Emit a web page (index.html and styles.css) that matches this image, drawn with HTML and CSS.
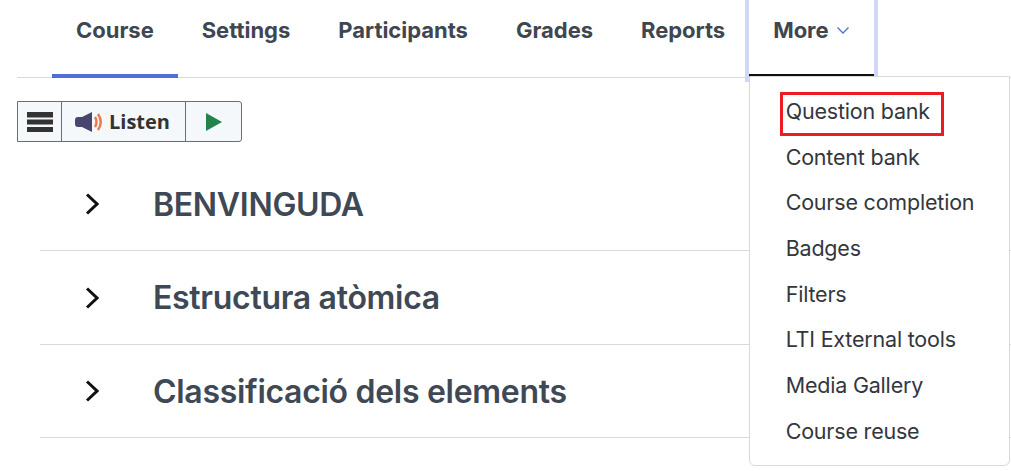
FILE: index.html
```html
<!DOCTYPE html>
<html lang="en">
<head>
    <meta charset="UTF-8">
    <title>Course</title>
    <link rel="stylesheet" href="styles.css">
</head>
<body>
    <nav class="tabs">
        <a class="tab active">Course</a>
        <a class="tab">Settings</a>
        <a class="tab">Participants</a>
        <a class="tab">Grades</a>
        <a class="tab">Reports</a>
        <div class="more-wrap">
            <a class="tab more">More
                <svg class="more-caret" width="14" height="9" viewBox="0 0 14 9"><path d="M1.500 1.500l5.500 5.500 5.500-5.500" fill="none" stroke="#4f6fd8" stroke-width="1.300"/></svg>
            </a>
            <ul class="menu">
                <li class="menu-item">Question bank<span class="highlight"></span></li>
                <li class="menu-item">Content bank</li>
                <li class="menu-item">Course completion</li>
                <li class="menu-item">Badges</li>
                <li class="menu-item">Filters</li>
                <li class="menu-item">LTI External tools</li>
                <li class="menu-item">Media Gallery</li>
                <li class="menu-item">Course reuse</li>
            </ul>
        </div>
    </nav>

    <div class="listen-bar">
        <div class="listen-cell menu-cell">
            <svg width="26" height="20" viewBox="0 0 26 20"><path d="M0 0h26v5.500H0zM0 7.500h26v5H0zM0 15h26v5H0z" fill="#333"/></svg>
        </div>
        <div class="listen-cell listen-label">
            <svg width="28" height="22" viewBox="0 0 28 22">
                <path d="M0 9q0-3 3-3h4l10-5v20l-10-5H3q-3 0-3-3z" fill="#47466f"/>
                <path d="M20 6q3 5 0 10M23 3q5.500 8 0 16" fill="none" stroke="#f07a50" stroke-width="2.500"/>
            </svg>
            Listen
        </div>
        <div class="listen-cell play-cell">
            <svg width="16" height="18" viewBox="0 0 16 18"><path d="M0 0l16 9-16 9z" fill="#23834a"/></svg>
        </div>
    </div>

    <div class="sections">
        <div class="section">
            <svg class="chevron" width="14" height="22" viewBox="0 0 14 22"><path d="M2 1.500l10 9.500-10 9.500" fill="none" stroke="#111" stroke-width="3"/></svg>
            <h3 class="section-title">BENVINGUDA</h3>
        </div>
        <div class="section">
            <svg class="chevron" width="14" height="22" viewBox="0 0 14 22"><path d="M2 1.500l10 9.500-10 9.500" fill="none" stroke="#111" stroke-width="3"/></svg>
            <h3 class="section-title">Estructura atòmica</h3>
        </div>
        <div class="section">
            <svg class="chevron" width="14" height="22" viewBox="0 0 14 22"><path d="M2 1.500l10 9.500-10 9.500" fill="none" stroke="#111" stroke-width="3"/></svg>
            <h3 class="section-title">Classificació dels elements</h3>
        </div>
    </div>
</body>
</html>
```

FILE: styles.css
```css
body {
    font-family: Inter, "Liberation Sans", sans-serif;
    margin: 0;
    min-height: 471px;
    background-color: #fff;
    color: #3f4650;
}
.tabs {
    display: flex;
    margin-left: 17px;
    padding-left: 35px;
    height: 77px;
    border-bottom: 1px solid #d8d9dc;
}
.tab {
    display: flex;
    align-items: center;
    gap: 7px;
    height: 60px;
    padding: 0 24px;
    font-size: 22px;
    font-weight: 700;
    letter-spacing: -0.02px;
    color: #3f4650;
}
.active {
    padding-bottom: 14px;
    border-bottom: 4px solid #4f6fd8;
}
.more-wrap {
    position: relative;
}
.more {
    position: relative;
    padding-bottom: 14px;
    border-bottom: 4px solid #111;
    box-shadow: 0 0 0 4px #d0d8f5;
}
.more-caret {
    margin-top: 1px;
}
.menu {
    position: absolute;
    top: 76px;
    left: 0;
    width: 259px;
    height: 376px;
    margin: 0;
    padding: 12px 0 0;
    list-style: none;
    background-color: #fff;
    border: 1px solid #d8d9dc;
    border-radius: 0 0 6px 6px;
    z-index: 2;
}
.menu-item {
    position: relative;
    height: 45.700px;
    line-height: 45.700px;
    padding-left: 35.500px;
    font-size: 21.500px;
    letter-spacing: -0.2px;
    color: #33373d;
}
.highlight {
    position: absolute;
    left: 30px;
    top: 3px;
    width: 158px;
    height: 38px;
    border: 3px solid #ed1c24;
}
.listen-bar {
    display: inline-flex;
    height: 39px;
    margin: 23px 0 0 17px;
    background-color: #f4f8fb;
    border: 1px solid #6b6f75;
    border-radius: 0 3px 3px 0;
}
.listen-cell {
    display: flex;
    align-items: center;
    justify-content: center;
}
.menu-cell {
    width: 43px;
    border-right: 1px solid #6b6f75;
}
.listen-label {
    width: 110px;
    padding-left: 13px;
    gap: 6px;
    justify-content: flex-start;
    border-right: 1px solid #6b6f75;
    font-family: "Open Sans", sans-serif;
    font-size: 20px;
    font-weight: 700;
    color: #333;
}
.play-cell {
    width: 55px;
}
.sections {
    margin: 15.500px 0 0 40px;
}
.section {
    display: flex;
    align-items: center;
    height: 91.500px;
    padding-top: 1px;
    border-bottom: 1px solid #d8d9e2;
}
.chevron {
    margin-left: 45px;
}
.section-title {
    margin: 0 0 0 54px;
    font-size: 32px;
    font-weight: 600;
    letter-spacing: -0.3px;
    color: #3f4956;
}
```
